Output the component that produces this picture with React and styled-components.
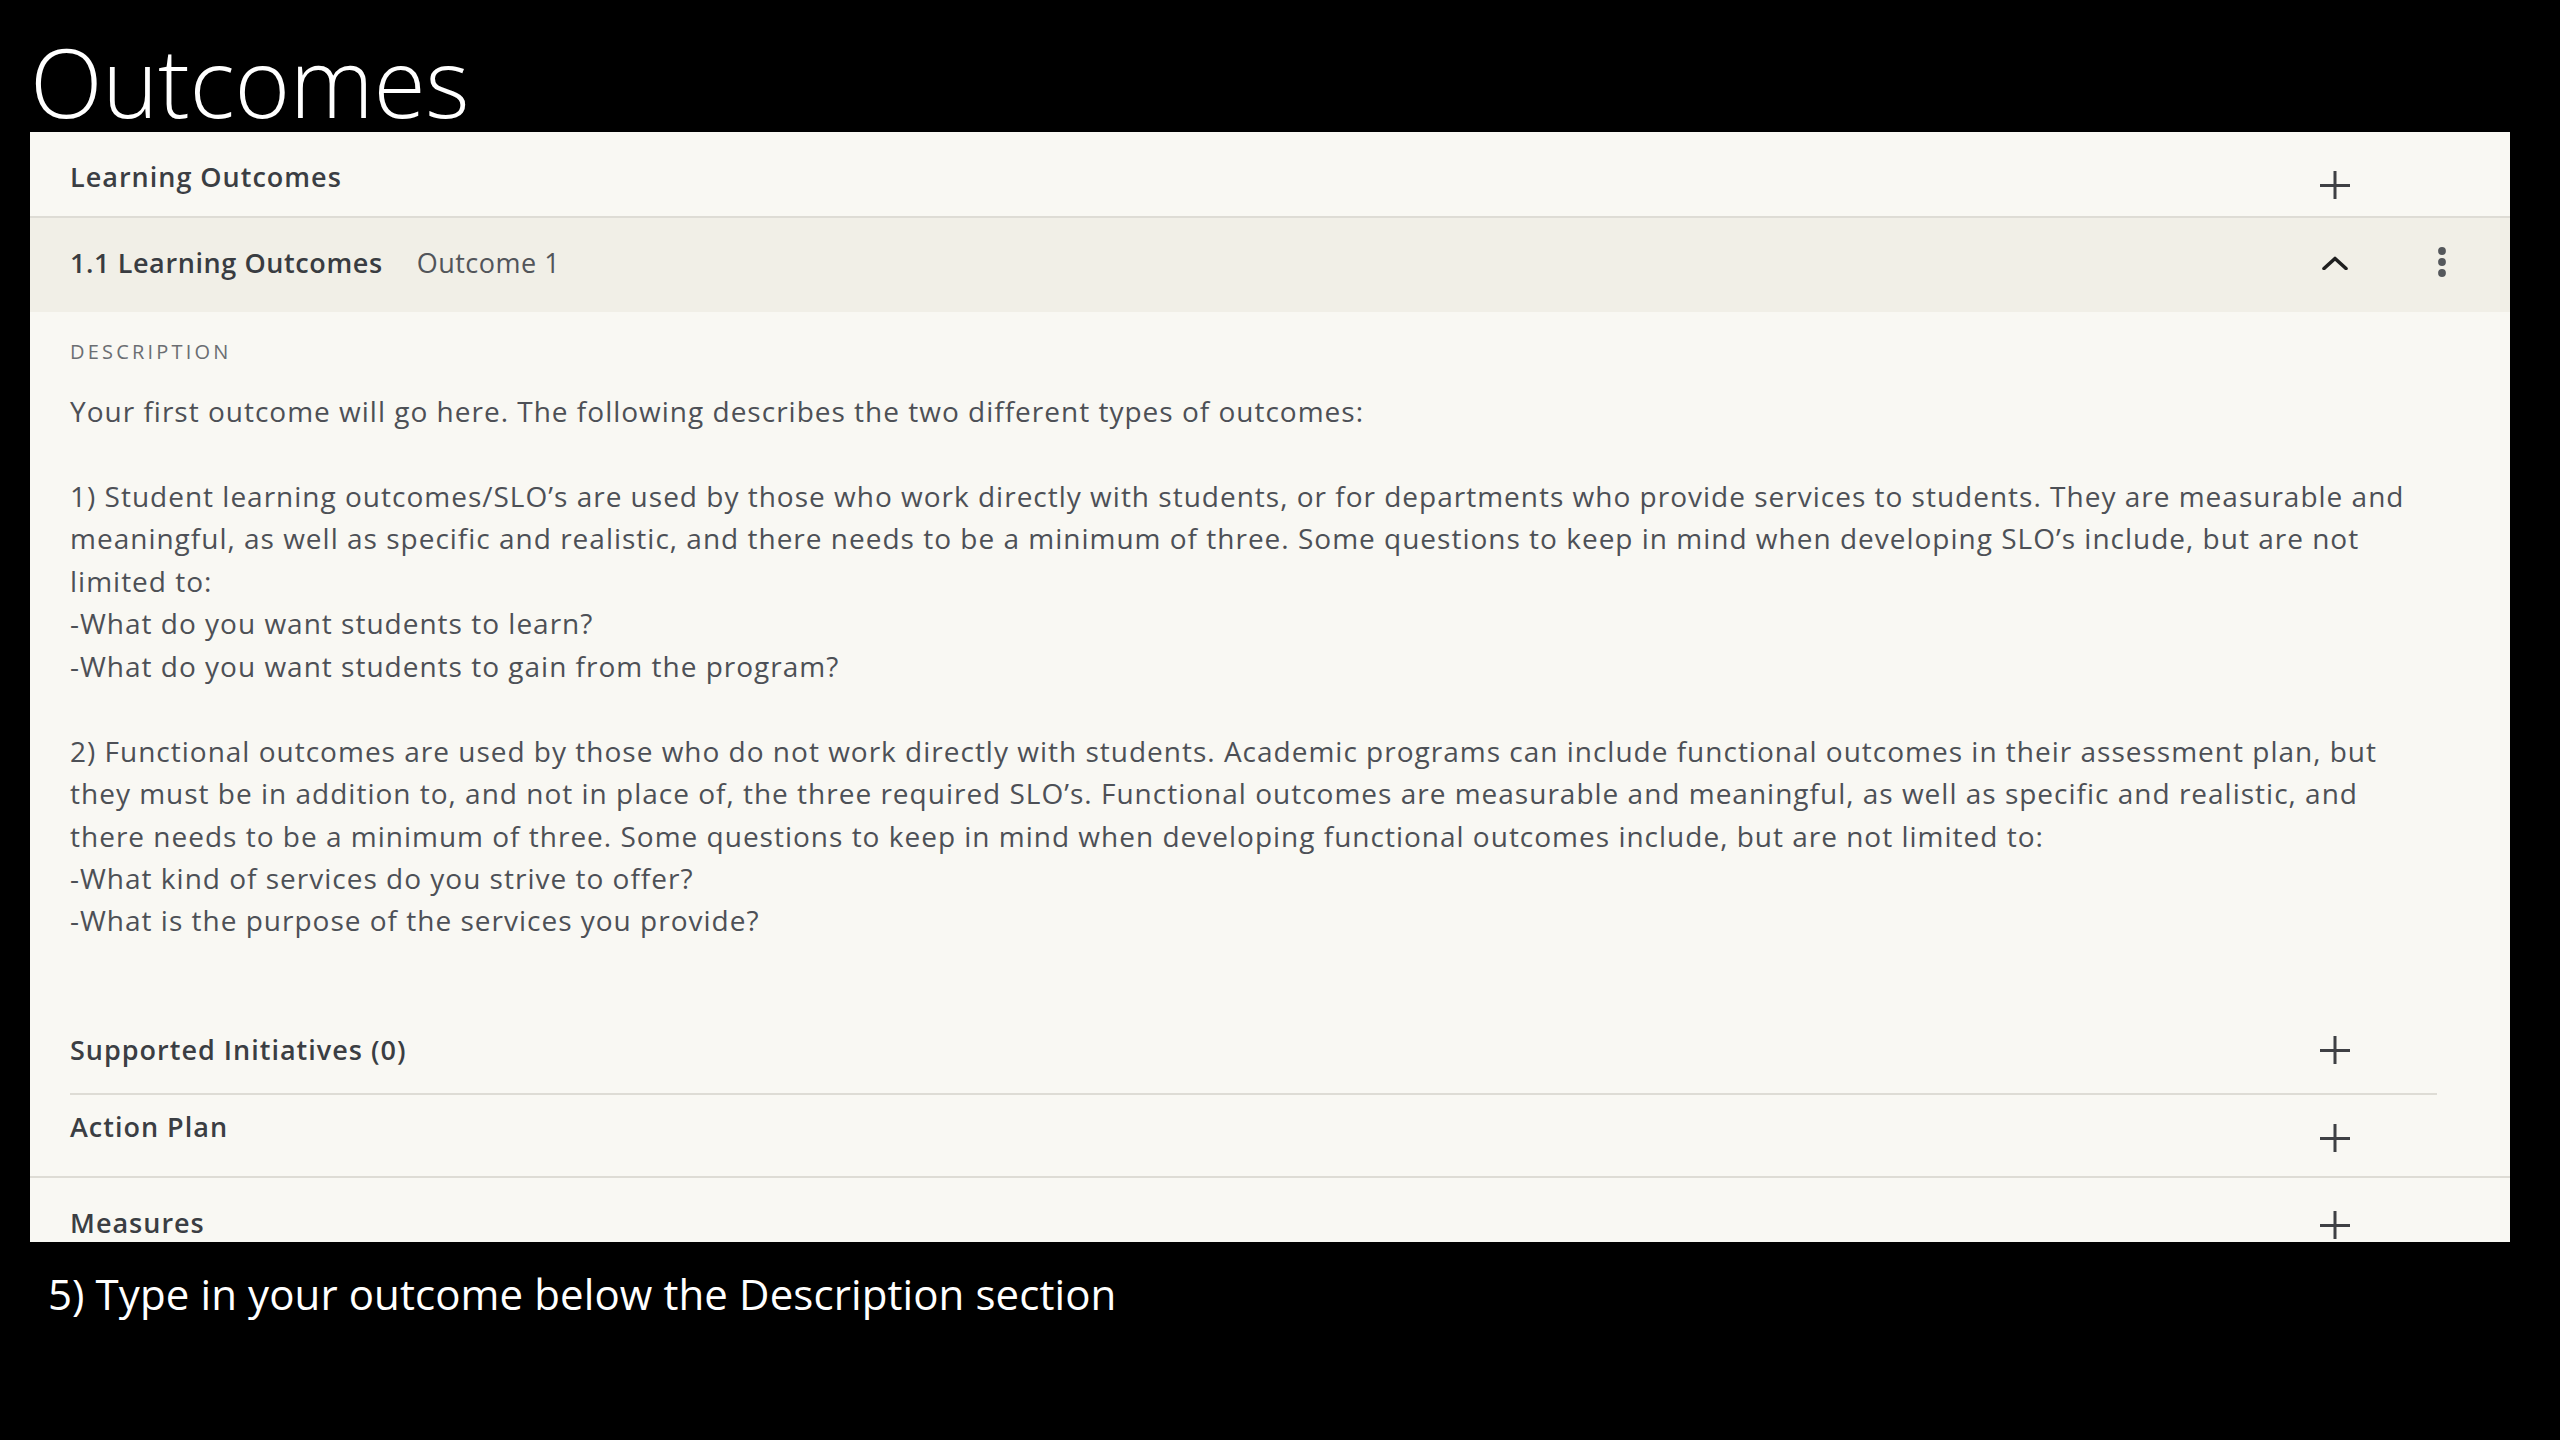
import React from "react";
import styled, { createGlobalStyle } from "styled-components";

const Global = createGlobalStyle`
  html, body { margin: 0; padding: 0; background: #000; }
  body { width: 2560px; height: 1440px; overflow: hidden; }
  #root { width: 2560px; height: 1440px; }
`;

const Page = styled.div`
  width: 2560px;
  height: 1440px;
  box-sizing: border-box;
  background: #000;
  padding: 34px 0 0 30px;
  display: flex;
  flex-direction: column;
`;

const SlideTitle = styled.h1`
  margin: 0 0 3px 0;
  font-family: "Open Sans", "Noto Sans", sans-serif;
  font-weight: 300;
  font-size: 95px;
  line-height: 95px;
  letter-spacing: -0.3px;
  color: #fff;
`;

const Panel = styled.section`
  width: 2480px;
  height: 1110px;
  overflow: hidden;
  background: #f9f8f3;
  display: flex;
  flex-direction: column;
  font-family: "Open Sans", "Noto Sans", sans-serif;
  color: #3c3f44;
`;

const Row = styled.div`
  display: flex;
  align-items: flex-start;
  box-sizing: border-box;
  height: ${(p) => p.$h}px;
  flex: none;
  padding: ${(p) => p.$pt}px ${(p) => p.$pr ?? 160}px 0 ${(p) => p.$pl ?? 40}px;
  border-bottom: ${(p) => (p.$divider ? "2px solid #dedcd5" : "none")};
`;

const RowTitle = styled.div`
  font-size: 27px;
  line-height: 32px;
  font-weight: 600;
  letter-spacing: 1px;
  color: #3b3e43;
  white-space: nowrap;
`;

const Spacer = styled.div`
  flex: 1;
`;

const IconSlot = styled.div`
  width: 30px;
  height: 30px;
  flex: none;
  margin-top: ${(p) => p.$dy || 0}px;
  display: flex;
  align-items: center;
  justify-content: center;
`;

const Header = styled.div`
  display: flex;
  align-items: center;
  box-sizing: border-box;
  height: 94px;
  flex: none;
  background: #f1efe7;
  padding: 0 58px 4px 40px;
`;

const HeaderTitle = styled.div`
  font-size: 27px;
  line-height: 32px;
  font-weight: 600;
  letter-spacing: 0.6px;
  color: #393c41;
  white-space: nowrap;
`;

const HeaderSub = styled.div`
  font-size: 27px;
  line-height: 32px;
  font-weight: 400;
  letter-spacing: 0.5px;
  color: #52555a;
  margin-left: 34px;
  white-space: nowrap;
`;

const KebabSlot = styled.div`
  width: 20px;
  height: 34px;
  margin-left: 82px;
  margin-top: -2px;
  display: flex;
  align-items: center;
  justify-content: center;
`;

const Body = styled.div`
  padding: 28px 40px 0 40px;
  flex: none;
  height: 695px;
  box-sizing: border-box;
`;

const Label = styled.div`
  font-size: 20px;
  line-height: 24px;
  letter-spacing: 3.2px;
  color: #6b6e72;
  text-transform: uppercase;
  margin-bottom: 26px;
`;

const Para = styled.p`
  margin: 0 0 42.45px 0;
  font-size: 28px;
  line-height: 42.45px;
  letter-spacing: 1px;
  color: #4d5056;
  white-space: nowrap;
`;

const SubGroup = styled.div`
  padding: 0 73px 0 40px;
  flex: none;
`;

const Plus = () => (
  <svg width="30" height="28" viewBox="0 0 30 28">
    <path d="M0 14.5H30M15 0V28" stroke="#3f4044" strokeWidth="3" fill="none" />
  </svg>
);

const Chevron = () => (
  <svg width="26" height="14" viewBox="0 0 26 14">
    <polyline points="2,12.5 13,2.5 24,12.5" stroke="#1f1f1f" strokeWidth="3.6" fill="none" strokeLinecap="round" strokeLinejoin="round" />
  </svg>
);

const Kebab = () => (
  <svg width="10" height="32" viewBox="0 0 10 32">
    <circle cx="5" cy="5" r="3.9" fill="#55585c" />
    <circle cx="5" cy="16" r="3.9" fill="#55585c" />
    <circle cx="5" cy="27" r="3.9" fill="#55585c" />
  </svg>
);

const paragraphs = [
  ["Your first outcome will go here. The following describes the two different types of outcomes:"],
  [
    "1) Student learning outcomes/SLO\u2019s are used by those who work directly with students, or for departments who provide services to students. They are measurable and",
    "meaningful, as well as specific and realistic, and there needs to be a minimum of three. Some questions to keep in mind when developing SLO\u2019s include, but are not",
    "limited to:",
    "-What do you want students to learn?",
    "-What do you want students to gain from the program?",
  ],
  [
    "2) Functional outcomes are used by those who do not work directly with students. Academic programs can include functional outcomes in their assessment plan, but",
    "they must be in addition to, and not in place of, the three required SLO\u2019s. Functional outcomes are measurable and meaningful, as well as specific and realistic, and",
    "there needs to be a minimum of three. Some questions to keep in mind when developing functional outcomes include, but are not limited to:",
    "-What kind of services do you strive to offer?",
    "-What is the purpose of the services you provide?",
  ],
];

const Caption = styled.p`
  margin: 23px 0 0 18px;
  font-family: "Open Sans", "Noto Sans", sans-serif;
  font-size: 42px;
  line-height: 57px;
  letter-spacing: 0.1px;
  color: #fff;
  white-space: nowrap;
`;

export default function App() {
  return (
    <>
      <Global />
      <Page>
        <SlideTitle>Outcomes</SlideTitle>
        <Panel>
          <Row $h={86} $pt={29} $divider>
            <RowTitle>Learning Outcomes</RowTitle>
            <Spacer />
            <IconSlot $dy={9}>
              <Plus />
            </IconSlot>
          </Row>
          <Header>
            <HeaderTitle>1.1 Learning Outcomes</HeaderTitle>
            <HeaderSub>Outcome 1</HeaderSub>
            <Spacer />
            <IconSlot>
              <Chevron />
            </IconSlot>
            <KebabSlot>
              <Kebab />
            </KebabSlot>
          </Header>
          <Body>
            <Label>Description</Label>
            {paragraphs.map((lines, i) => (
              <Para key={i}>
                {lines.map((l, j) => (
                  <React.Fragment key={j}>
                    {j > 0 && <br />}
                    {l}
                  </React.Fragment>
                ))}
              </Para>
            ))}
          </Body>
          <SubGroup>
            <Row $h={88} $pt={27} $pl={0} $pr={87} $divider>
              <RowTitle>Supported Initiatives (0)</RowTitle>
              <Spacer />
              <IconSlot $dy={1}>
                <Plus />
              </IconSlot>
            </Row>
          </SubGroup>
          <Row $h={83} $pt={16} $divider>
            <RowTitle>Action Plan</RowTitle>
            <Spacer />
            <IconSlot $dy={12}>
              <Plus />
            </IconSlot>
          </Row>
          <Row $h={80} $pt={29}>
            <RowTitle>Measures</RowTitle>
            <Spacer />
            <IconSlot $dy={3}>
              <Plus />
            </IconSlot>
          </Row>
        </Panel>
        <Caption>5) Type in your outcome below the Description section</Caption>
      </Page>
    </>
  );
}
